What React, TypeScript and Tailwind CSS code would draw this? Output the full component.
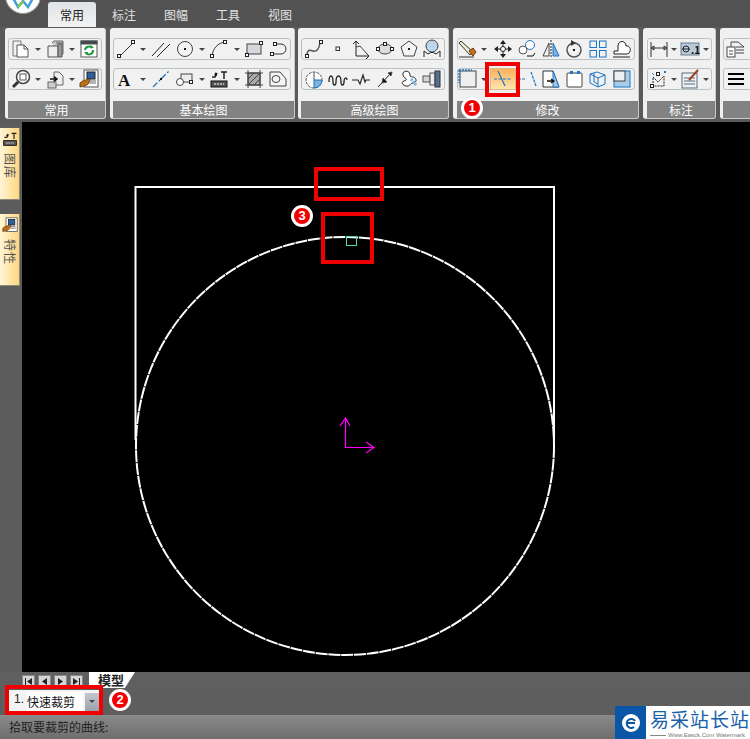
import type { ReactNode } from 'react';

const G = '#4a5560';
const B = '#1b75c4';

function Ic({ children, size = 20 }: { children: ReactNode; size?: number }) {
  return (
    <svg width={size} height={size} viewBox="0 0 20 20" fill="none" stroke={G} strokeWidth="1">
      {children}
    </svg>
  );
}

const dot = (x: number, y: number) => <rect x={x - 1.5} y={y - 1.5} width="3" height="3" fill="#fff" stroke="#222" />;

const icons: Record<string, ReactNode> = {
  copy: <><path d="M2 2h8v4M2 2v15h4" stroke="#777" /><path d="M6 6h7l4 4v8H6z" fill="#fff" stroke="#555" /><path d="M13 6v4h4" stroke="#555" /></>,
  stack: <><path d="M7 4l2-2h9v13l-3 3" fill="#ccc" stroke="#666" /><path d="M3 7h10v11H3z" fill="#eee" stroke="#555" /><path d="M11 4h7" stroke="#555" /><path d="M13 7v11h4V5h-4z" fill="#999" stroke="#555" /></>,
  refresh: <><rect x="2" y="2" width="16" height="16" fill="#fff" stroke="#555" /><rect x="2" y="2" width="16" height="3" fill="#444" /><path d="M6 11a4 4 0 0 1 7-2M14 11a4 4 0 0 1-7 3" stroke="#1e9a3c" strokeWidth="2" /><path d="M12 6l3 3h-4zM8 16l-3-3h4z" fill="#1e9a3c" stroke="none" /></>,
  zoom: <><circle cx="12" cy="8" r="6.5" fill="#fff" stroke="#444" strokeWidth="1.5" /><rect x="9" y="5" width="6" height="6" stroke="#555" /><path d="M7 13l-5 5" stroke="#333" strokeWidth="3" /></>,
  page: <><path d="M9 3h5l4 4v9H9z" fill="#eee" stroke="#666" /><rect x="3" y="13" width="8" height="6" fill="#ccc" stroke="#666" /><path d="M5 10h6M9 7.5l3 2.5-3 2.5" stroke="#111" strokeWidth="1.5" /></>,
  palette: <><rect x="5" y="1" width="14" height="17" fill="#fff" stroke="#555" /><rect x="8" y="3" width="8" height="7" fill="#2c5f9e" stroke="#222" /><path d="M11 12h6M11 14h6" stroke="#666" /><path d="M1 14c3-3 6-3 10-4l-1 4c-2 3-5 3-9 4z" fill="#b8701e" stroke="#7a4510" /></>,
  line: <><path d="M4 17L17 4" stroke="#333" />{dot(3, 17)}{dot(17, 3)}</>,
  parallel: <path d="M1 17L13 4M6 18L19 5" stroke="#222" />,
  circle: <><circle cx="10" cy="10" r="7.5" fill="#f4f4f4" stroke="#444" /><rect x="9" y="9" width="2" height="2" fill="#111" stroke="none" /></>,
  arc: <><path d="M3 17C4 9 9 4 16 3" stroke="#333" />{dot(3, 17)}{dot(16, 3)}</>,
  rect: <><rect x="3" y="5" width="14" height="10" fill="#d5d9de" stroke="#444" />{dot(17, 4)}{dot(3, 16)}</>,
  slot: <><path d="M6 15h7a5 5 0 0 0 0-10H8" stroke="#333" />{dot(4, 15)}{dot(7, 5)}</>,
  text: <text x="2" y="17" fill="#111" stroke="none" fontSize="17" fontWeight="700" fontFamily="Liberation Serif, serif">A</text>,
  center: <><path d="M2 18L18 2" stroke={B} strokeDasharray="6 2 2 2" strokeWidth="1.3" /><rect x="9" y="9" width="2" height="2" fill="#111" stroke="none" /></>,
  block: <><rect x="6" y="5" width="11" height="8" fill="#eee" stroke="#444" /><circle cx="5" cy="13" r="3.5" fill="#fff" stroke="#444" />{dot(16, 13)}</>,
  dim: <><path d="M3 8h3l2-4M12 3h6M15 3v7" stroke="#222" strokeWidth="1.5" /><path d="M7 3l-2 3 3 1z" fill="#111" stroke="none" /><rect x="2" y="12" width="16" height="6" fill="#555" stroke="#111" /><path d="M5 15h10" stroke="#fff" strokeDasharray="2 1" /></>,
  hatch: <><rect x="4" y="4" width="12" height="12" fill="#aaa" stroke="#333" /><path d="M4 10l6-6M4 16L16 4M10 16l6-6M1 4h18M1 16h18M4 1v18M16 1v18" stroke="#444" /></>,
  region: <><path d="M2 3h10l6 7v7H2z" fill="#f5f5f5" stroke="#444" /><ellipse cx="8" cy="10" rx="4" ry="3.5" stroke="#444" /></>,
  spline: <><path d="M3 17c0-7 3-6 6-5s6-1 7-8" stroke="#555" strokeWidth="1.5" />{dot(3, 17)}{dot(17, 3)}</>,
  point: <rect x="8" y="8" width="3.5" height="3.5" fill="#fff" stroke="#333" />,
  angle: <><path d="M5 2v15h13M2 5l3-3 3 3M15 14l3 3-3 3" stroke="#222" /><path d="M5 8l4-1 8 9" stroke="#444" /></>,
  ellipse: <><ellipse cx="10" cy="10" rx="7" ry="5" fill="#ddd" stroke="#444" />{dot(3, 10)}{dot(17, 10)}{dot(10, 5)}</>,
  polygon: <><path d="M10 2l8 6-3 9H5L2 8z" fill="#f4f4f4" stroke="#444" /><rect x="9" y="9" width="2" height="2" fill="#222" stroke="none" /></>,
  ball: <><circle cx="10" cy="7" r="6" fill="#bcd6ec" stroke="#444" /><path d="M2 18V12l4 3c3-2 5-2 8 0l4-3v6" stroke="#222" /></>,
  pie: <><circle cx="10" cy="11" r="8" fill="#fff" stroke="#555" strokeDasharray="3 1" /><path d="M10 11h8a8 8 0 0 1-8 8z" fill="#7fb2dc" stroke={B} /><path d="M10 3v8" stroke="#555" /></>,
  wave: <path d="M1 13c0-8 4-8 4 0 0 4 3 4 3 0 0-8 5-8 5 0 0 4 3 4 3 0 0-5 3-5 3-2" stroke="#222" strokeWidth="1.3" />,
  zigzag: <path d="M1 11h6l2 4 3-9 2 7 1-2h4" stroke="#222" strokeWidth="1.2" />,
  needle: <><path d="M3 18L17 3" stroke="#222" /><path d="M8 9l4 4-5 1zM13 4l4-1-1 4z" fill="#111" /></>,
  blob: <><path d="M5 3c3-2 6 0 6 3s3 1 5 3 1 5-2 5-3 4-7 3-5-4-2-5 3-2 1-3-3-5-1-6z" fill="#fff" stroke="#222" /><path d="M12 10l5 6" stroke="#6db4e8" strokeWidth="3" strokeDasharray="2 1" /></>,
  drum: <><rect x="1" y="7" width="7" height="6" fill="#cfd6dc" stroke="#555" /><rect x="8" y="4" width="5" height="12" fill="#e9edf0" stroke="#555" /><rect x="13" y="2" width="5" height="16" fill="#56708c" stroke="#334" /></>,
  brush: <><path d="M3 2l12 11-3 3L1 4z" fill="#f2ead0" stroke="#333" /><path d="M11 12l4-3 3 4-3 4z" fill="#c8701e" stroke="#6a3a10" /><path d="M1 18h15" stroke="#333" /></>,
  move: <><path d="M10 2v16M2 10h16" stroke="#222" /><path d="M10 1l3 4H7zM10 19l3-4H7zM1 10l4-3v6zM19 10l-4-3v6z" fill="#222" stroke="none" /><circle cx="10" cy="10" r="2.5" fill="#fff" stroke="#222" /></>,
  copy2: <><circle cx="13" cy="6" r="4.5" fill="#fff" stroke={B} /><circle cx="6" cy="11" r="4" fill="#fff" stroke="#555" /><path d="M10 17h6l2-3" stroke="#111" /></>,
  mirror: <><path d="M10 1v18" stroke="#222" strokeDasharray="2 1" /><path d="M8 4v13H2z" stroke="#444" /><path d="M12 4v13h6z" fill="#7fb2dc" stroke={B} /></>,
  rotate: <><circle cx="10" cy="11" r="7" stroke="#555" strokeWidth="1.5" /><rect x="9" y="10" width="2" height="2" fill="#111" stroke="none" /><path d="M7 1l5 3-5 3z" fill="#333" stroke="none" /></>,
  grid: <><rect x="2" y="2" width="6.5" height="6.5" stroke={B} /><rect x="11.5" y="2" width="6.5" height="6.5" stroke={B} /><rect x="2" y="11.5" width="6.5" height="6.5" stroke={B} /><rect x="11.5" y="11.5" width="6.5" height="6.5" stroke={B} /></>,
  cloud: <><path d="M3 15h-1v-3h4V7c0-6 8-6 8 0 5-1 6 7 1 8z" fill="#fff" stroke="#222" /><path d="M1 18h17" stroke="#222" /></>,
  select: <><rect x="2" y="2" width="16" height="16" fill="#eee" stroke="#444" /><path d="M1 1h13" stroke={B} strokeDasharray="2 1" strokeWidth="1.5" /><path d="M1 1v13" stroke={B} strokeDasharray="2 1" strokeWidth="1.5" /></>,
  trim: <><path d="M1 10h18" stroke={B} strokeDasharray="3 1.5" /><path d="M5 2l7 15" stroke={B} strokeWidth="1.2" /></>,
  extend: <path d="M1 10h8M14 3l5 14" stroke={B} strokeDasharray="3 1" strokeWidth="1.2" />,
  stretch: <><path d="M2 2h10l6 16H2z" fill="#fff" stroke="#333" /><path d="M12 2l6 16h-6z" fill="#9fc8e8" stroke={B} /><path d="M6 12h6M10 10l3 2-3 2" stroke="#111" strokeWidth="1.3" /></>,
  fillet: <><rect x="3" y="4" width="15" height="14" rx="1" fill="#fff" stroke="#444" /><path d="M6 2h3v3H6zM13 2h3v3h-3z" fill={B} stroke="none" /></>,
  box3d: <path d="M2 5l7-2 8 3v9l-7 3-8-4zM2 5l8 4v9M10 9l7-3M6 4v9l4 2" stroke={B} />,
  offset: <><rect x="2" y="2" width="16" height="16" fill="#a8cdea" stroke={B} /><rect x="2" y="2" width="11" height="10" fill="#eee" stroke="#444" /></>,
  dimLinear: <path d="M2 3v15M18 3v15M2 9h16M2 9l3-2v4zM18 9l-3-2v4z" stroke="#333" />,
  dimTol: <><rect x="1" y="4" width="18" height="12" fill="#b9c9da" stroke="#6a7f94" /><circle cx="6" cy="10" r="3" stroke="#222" /><path d="M2 10h8" stroke="#222" /><text x="11" y="15" fontSize="10" fontWeight="700" fill="#111" stroke="none">.1</text></>,
  dimAuto: <><path d="M4 17V8l5 5 6-6v10z" stroke="#222" strokeDasharray="2 1" /><path d="M3 4l2 2M15 2l2 2M15 4l2-2" stroke={B} />{dot(3, 17)}{dot(9, 5)}</>,
  note: <><rect x="2" y="4" width="15" height="15" fill="#eef2f6" stroke="#5a6a7a" /><path d="M4 9h11M4 12h11M4 15h11" stroke="#5a6a7a" /><path d="M9 11l9-10" stroke="#a0401a" strokeWidth="2" /></>,
  table: <><rect x="1" y="8" width="8" height="10" fill="#fff" stroke="#444" /><path d="M3 12h4M3 15h4" stroke="#444" /><path d="M5 8V3h7l6 5M10 8h8M10 11h8M10 14h8" stroke="#444" /></>,
  layer: <path d="M2 5h16M2 10h16M2 15h16" stroke="#000" strokeWidth="2" />,
};

function Cell({ name, w = 'w-6', active = false }: { name: string; w?: string; active?: boolean }) {
  return (
    <div className={`${w} h-full flex items-center justify-center ${active ? 'bg-gradient-to-b from-[#fbb05a] to-[#fee4ae] outline outline-1 outline-[#d9ba88]' : ''}`}>
      <Ic>{icons[name]}</Ic>
    </div>
  );
}

function Arrow({ w = 'w-[11px]' }: { w?: string }) {
  return (
    <div className={`${w} h-full flex items-center justify-center`}>
      <div className="w-0 h-0 border-x-[3px] border-x-transparent border-t-[3px] border-t-[#444]" />
    </div>
  );
}

function Group({ children, className = '' }: { children: ReactNode; className?: string }) {
  return (
    <div className={`h-[22px] flex items-center rounded-[3px] border border-[#b9c2c4] bg-[#f1f1f1] ${className}`}>
      {children}
    </div>
  );
}

function Panel({ title, w, className = '', children }: { title: string; w: string; className?: string; children: ReactNode }) {
  return (
    <div className={`${w} h-[91px] shrink-0 flex flex-col rounded-[3px] overflow-hidden bg-[#f0f0f0] border-r border-b border-[#c9c9c9] ${className}`}>
      <div className="flex-1 flex flex-col pt-[10px] gap-[8px] items-start">{children}</div>
      <div className="h-[17px] bg-[#828282] text-white text-[12px] leading-[17px] text-center">{title}</div>
    </div>
  );
}

function RedBox({ className }: { className: string }) {
  return <div className={`absolute border-[4px] border-[#f00000] ${className}`} />;
}

function Badge({ n, className }: { n: number; className: string }) {
  return (
    <div className={`absolute w-[22px] h-[22px] rounded-full bg-[#f00000] border-[3px] border-white text-white text-[13px] font-bold leading-[16px] text-center [font-family:'Liberation_Sans',sans-serif] ${className}`}>
      {n}
    </div>
  );
}

function SideTab({ icon, label, className = '' }: { icon: string; label: string; className?: string }) {
  return (
    <div className={`w-5 h-[72px] flex flex-col items-center bg-gradient-to-r from-[#fff4d6] to-[#ffd77e] border-r border-b border-[#8a8a7a] ${className}`}>
      <div className="h-[20px] mt-px flex items-center justify-center">
        <Ic size={16}>{icons[icon]}</Ic>
      </div>
      <div className="mt-[4px] text-[12px] leading-[18px] text-[#555] [writing-mode:vertical-rl] [text-orientation:sideways] tracking-[1px]">{label}</div>
    </div>
  );
}

function NavBtn({ d }: { d: string }) {
  return (
    <div className="w-[13px] h-[12px] flex items-center justify-center bg-[#d6d6d6] border border-[#888]">
      <svg width="9" height="9" viewBox="0 0 9 9"><path d={d} fill="#222" /></svg>
    </div>
  );
}

export default function App() {
  return (
    <div className="relative w-[750px] h-[739px] overflow-hidden flex flex-col bg-[#565656] [font-family:'Noto_Sans_CJK_SC',sans-serif]">
      {/* title and tabs */}
      <div className="h-[27px] shrink-0 flex items-end pl-[48px] bg-[#525252]">
        <div className="w-[48px] h-[25px] rounded-t-[3px] bg-gradient-to-b from-[#dfe3e6] to-[#f2f2f2] text-[12px] leading-[25px] text-center text-[#222]">常用</div>
        <div className="flex gap-[28px] pl-[16px] h-[25px] text-[12px] leading-[25px] text-[#e2e2e2]">
          <span>标注</span>
          <span>图幅</span>
          <span>工具</span>
          <span>视图</span>
        </div>
      </div>

      {/* ribbon */}
      <div className="h-[95px] shrink-0 flex gap-[3px] pl-[5px] pt-px bg-[#5a5a5a]">
        <Panel title="常用" w="w-[101px]" className="pl-[3px]">
          <Group className="w-[94px]"><Cell name="copy" /><Arrow /><Cell name="stack" /><Arrow /><Cell name="refresh" /></Group>
          <Group className="w-[94px]"><Cell name="zoom" /><Arrow /><Cell name="page" /><Arrow /><Cell name="palette" /></Group>
        </Panel>
        <Panel title="基本绘图" w="w-[185px]" className="pl-[3px] ml-[1px]">
          <Group className="w-[178px]"><Cell name="line" /><Arrow /><Cell name="parallel" /><Cell name="circle" /><Arrow /><Cell name="arc" /><Arrow /><Cell name="rect" /><Cell name="slot" /></Group>
          <Group className="w-[178px]"><Cell name="text" /><Arrow /><Cell name="center" /><Cell name="block" /><Arrow /><Cell name="dim" /><Arrow /><Cell name="hatch" /><Cell name="region" /></Group>
        </Panel>
        <Panel title="高级绘图" w="w-[151px]" className="pl-[3px]">
          <Group className="w-[144px]"><Cell name="spline" /><Cell name="point" /><Cell name="angle" /><Cell name="ellipse" /><Cell name="polygon" /><Cell name="ball" /></Group>
          <Group className="w-[144px]"><Cell name="pie" /><Cell name="wave" /><Cell name="zigzag" /><Cell name="needle" /><Cell name="blob" /><Cell name="drum" /></Group>
        </Panel>
        <Panel title="修改" w="w-[186px]" className="pl-[4px] ml-[1px]">
          <Group className="w-[178px]"><Cell name="brush" w="w-5" /><Arrow w="w-[13px]" /><Cell name="move" /><Cell name="copy2" /><Cell name="mirror" /><Cell name="rotate" /><Cell name="grid" /><Cell name="cloud" /></Group>
          <Group className="w-[178px]"><Cell name="select" w="w-5" /><Arrow w="w-[13px]" /><Cell name="trim" active /><Cell name="extend" /><Cell name="stretch" /><Cell name="fillet" /><Cell name="box3d" /><Cell name="offset" /></Group>
        </Panel>
        <Panel title="标注" w="w-[73px]" className="pl-[4px] ml-px">
          <Group className="w-[65px]"><Cell name="dimLinear" w="w-[22px]" /><Arrow w="w-[10px]" /><Cell name="dimTol" w="w-[22px]" /><Arrow /></Group>
          <Group className="w-[65px]"><Cell name="dimAuto" w="w-[22px]" /><Arrow w="w-[10px]" /><Cell name="note" w="w-[22px]" /><Arrow /></Group>
        </Panel>
        <Panel title="" w="w-[40px]" className="pl-[3px] ml-px">
          <Group className="w-[40px]"><Cell name="table" /></Group>
          <Group className="w-[40px]"><Cell name="layer" /></Group>
        </Panel>
      </div>

      {/* side tabs and canvas */}
      <div className="flex-1 min-h-0 flex">
        <div className="w-[22px] shrink-0 pt-[6px] flex flex-col gap-[14px] bg-[#5c5c5c]">
          <SideTab icon="dim" label="图库" />
          <SideTab icon="palette" label="特性" />
        </div>
        <div className="flex-1 bg-black">
          <svg className="block w-full h-full" viewBox="22 122 728 550" fill="none">
            <path d="M135.5 440V187H554V440" stroke="#fff" strokeWidth="2" />
            <circle cx="345" cy="446" r="209" stroke="#fff" strokeWidth="2" strokeDasharray="12 0.8" />
            <rect x="346.5" y="236.5" width="10" height="9" stroke="#48e09a" />
            <path d="M345.5 418V447.5H374M340 426L345.5 418L350 426M366 442L374 447.5L366 453" stroke="#ff00ff" strokeWidth="1.2" />
          </svg>
        </div>
      </div>

      {/* model tabs */}
      <div className="h-[16px] shrink-0 flex items-start pl-[22px] bg-[#5f5f5f]">
        <div className="flex gap-[3px] pt-[3px]">
          <NavBtn d="M1 1h1v7H1zM8 1v7L3 4.5z" />
          <NavBtn d="M7 1v7L2 4.5z" />
          <NavBtn d="M2 1v7l5-3.5z" />
          <NavBtn d="M8 1H7v7h1zM1 1v7l5-3.5z" />
        </div>
        <div className="ml-[6px] w-[46px] h-[16px] bg-white [clip-path:polygon(0_0,100%_0,78%_100%,0_100%)] pl-[9px] text-[13px] leading-[16px] font-bold text-[#222]">模型</div>
      </div>

      {/* command bar */}
      <div className="h-[27px] shrink-0 flex items-center pl-[9px] bg-[#5e5e5e]">
        <div className="w-[92px] h-[23px] flex items-center bg-[#f4f4f4]">
          <span className="w-[15px] -mt-[6px] pl-[5px] text-[12px] text-[#222] [font-family:'Liberation_Sans',sans-serif]">1.</span>
          <div className="ml-[3px] w-[56px] h-[20px] bg-white text-[12px] leading-[20px] text-[#111]">快速裁剪</div>
          <div className="ml-[2px] w-[14px] h-[18px] flex items-center justify-center bg-gradient-to-b from-[#c3c8cf] to-[#9ca2ab]">
            <div className="w-0 h-0 border-x-[3px] border-x-transparent border-t-[3px] border-t-[#444]" />
          </div>
        </div>
      </div>

      {/* status */}
      <div className="h-[24px] shrink-0 pl-[9px] bg-gradient-to-b from-[#8a8a8a] to-[#6e6e6e] text-[12px] leading-[24px] text-[#222]">拾取要裁剪的曲线:</div>

      {/* app logo */}
      <div className="absolute left-[5px] -top-[22px] w-[36px] h-[36px] rounded-full bg-white border border-[#999] flex items-end justify-center pb-[3px]">
        <svg width="24" height="14" viewBox="0 0 24 14" fill="none">
          <path d="M2 2l5 9 5-6 5 6 5-9" stroke="#3f9fd8" strokeWidth="2.5" />
          <path d="M7 11l5-6" stroke="#8cc63f" strokeWidth="2.5" />
        </svg>
      </div>

      {/* annotations */}
      <RedBox className="left-[485px] top-[62px] w-[35px] h-[35px]" />
      <RedBox className="left-[314px] top-[167px] w-[70px] h-[34px]" />
      <RedBox className="left-[321px] top-[212px] w-[53px] h-[52px]" />
      <RedBox className="left-[5px] top-[685px] w-[98px] h-[30px]" />
      <Badge n={1} className="left-[461px] top-[97px]" />
      <Badge n={2} className="left-[109px] top-[689px]" />
      <Badge n={3} className="left-[291px] top-[205px]" />

      {/* watermark */}
      <div className="absolute left-[615px] top-[706px] w-[135px] h-[33px] bg-white flex overflow-hidden">
        <div className="w-[31px] h-full shrink-0 flex items-center justify-center bg-[#0a57a8]">
          <svg width="22" height="22" viewBox="0 0 22 22" fill="none">
            <circle cx="11" cy="11" r="9" fill="#fff" />
            <path d="M7 11h8M15 9a4.5 4.5 0 1 0-1 6" stroke="#0a57a8" strokeWidth="2" />
          </svg>
        </div>
        <div className="pl-[4px] flex flex-col min-w-0">
          <div className="h-[25px] text-[19px] leading-[25px] tracking-[1px] text-[#1a5fa8] whitespace-nowrap">易采站长站</div>
          <div className="h-[8px] flex items-center gap-[2px]">
            <div className="w-[16px] h-px bg-[#888]" />
            <span className="text-[6px] leading-[8px] text-[#777] whitespace-nowrap [font-family:'Liberation_Sans',sans-serif]">Www.Easck.Com Watermark</span>
          </div>
        </div>
      </div>
    </div>
  );
}
